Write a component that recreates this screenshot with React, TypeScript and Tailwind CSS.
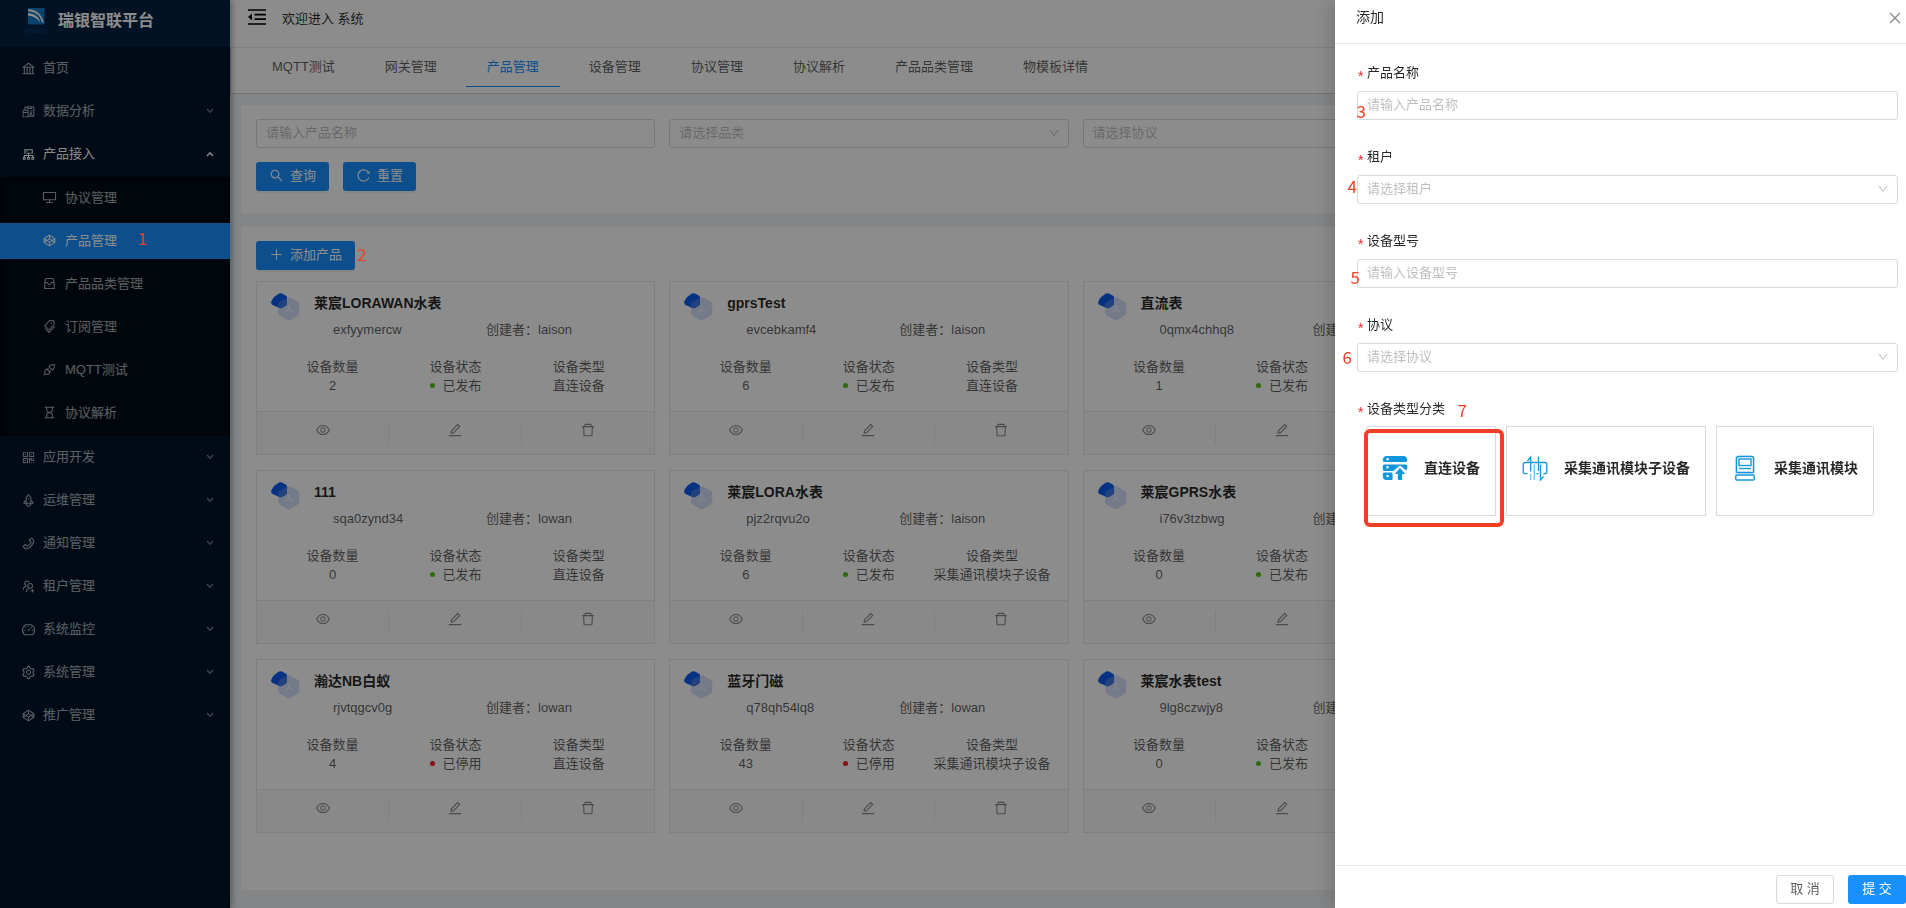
import type { ReactNode } from "react";
import type { IconType } from "react-icons";
import {
  AiOutlineApi,
  AiOutlineBank,
  AiOutlineCluster,
  AiOutlineClose,
  AiOutlineCodepen,
  AiOutlineDashboard,
  AiOutlineDelete,
  AiOutlineDesktop,
  AiOutlineDown,
  AiOutlineEdit,
  AiOutlineEye,
  AiOutlineHourglass,
  AiOutlinePhone,
  AiOutlinePlus,
  AiOutlineQrcode,
  AiOutlineReconciliation,
  AiOutlineReload,
  AiOutlineRocket,
  AiOutlineSearch,
  AiOutlineSetting,
  AiOutlineTags,
  AiOutlineUsergroupAdd,
} from "react-icons/ai";

type IconProps = { className?: string };
type MenuEntry = { label: string; icon: IconType | ((p: IconProps) => ReactNode); leaf?: boolean };

function CategoryIcon({ className }: IconProps) {
  return (
    <svg viewBox="0 0 15 15" className={className} fill="none" stroke="currentColor" strokeWidth="1.100" aria-hidden="true">
      <path d="M3.200 6V4.200c0-1 .6-1.700 1.600-1.700h5.400c1 0 1.600.7 1.600 1.700V6" />
      <path d="M2.800 6.500h2.700c.2 1.300 1 2 2 2s1.800-.7 2-2h2.700v6H2.800z" />
    </svg>
  );
}

const topMenu: MenuEntry[] = [
  { label: "首页", icon: AiOutlineBank, leaf: true },
  { label: "数据分析", icon: AiOutlineReconciliation },
];

const accessMenu: MenuEntry[] = [
  { label: "协议管理", icon: AiOutlineDesktop },
  { label: "产品管理", icon: AiOutlineCodepen },
  { label: "产品品类管理", icon: CategoryIcon },
  { label: "订阅管理", icon: AiOutlineTags },
  { label: "MQTT测试", icon: AiOutlineApi },
  { label: "协议解析", icon: AiOutlineHourglass },
];

const bottomMenu: MenuEntry[] = [
  { label: "应用开发", icon: AiOutlineQrcode },
  { label: "运维管理", icon: AiOutlineRocket },
  { label: "通知管理", icon: AiOutlinePhone },
  { label: "租户管理", icon: AiOutlineUsergroupAdd },
  { label: "系统监控", icon: AiOutlineDashboard },
  { label: "系统管理", icon: AiOutlineSetting },
  { label: "推广管理", icon: AiOutlineCodepen },
];

const tabs = ["MQTT测试", "网关管理", "产品管理", "设备管理", "协议管理", "协议解析", "产品品类管理", "物模板详情"];

type Product = {
  name: string;
  code: string;
  creator: string;
  count: number;
  published: boolean;
  kind: string;
};

const DIRECT = "直连设备";
const CHILD = "采集通讯模块子设备";

const products: Product[] = [
  { name: "莱宸LORAWAN水表", code: "exfyymercw", creator: "laison", count: 2, published: true, kind: DIRECT },
  { name: "gprsTest", code: "evcebkamf4", creator: "laison", count: 6, published: true, kind: DIRECT },
  { name: "直流表", code: "0qmx4chhq8", creator: "laison", count: 1, published: true, kind: DIRECT },
  { name: "111", code: "sqa0zynd34", creator: "lowan", count: 0, published: true, kind: DIRECT },
  { name: "莱宸LORA水表", code: "pjz2rqvu2o", creator: "laison", count: 6, published: true, kind: CHILD },
  { name: "莱宸GPRS水表", code: "i76v3tzbwg", creator: "lowan", count: 0, published: true, kind: DIRECT },
  { name: "瀚达NB白蚁", code: "rjvtqgcv0g", creator: "lowan", count: 4, published: false, kind: DIRECT },
  { name: "蓝牙门磁", code: "q78qh54lq8", creator: "lowan", count: 43, published: false, kind: CHILD },
  { name: "莱宸水表test", code: "9lg8czwjy8", creator: "lowan", count: 0, published: true, kind: DIRECT },
];

function BrandLogo() {
  return (
    <svg viewBox="0 0 26 28" className="h-7 w-[26px]" aria-hidden="true">
      <rect x="4" y="1" width="16.500" height="16.500" rx="1" fill="#1279c4" />
      <path d="M4 2.200c7 0 14 4 16 14.300l-2.500-2.500C16 8 11 4.200 4 4.200z" fill="#fff" />
      <path d="M4 6.200c6.500.4 10.500 3 12.500 9.300C13 11.500 9.500 9.300 4 8.600z" fill="#fff" />
      <text x="12.500" y="26" textAnchor="middle" fontSize="8" fill="#08407c" fontFamily="Liberation Sans, sans-serif">
        Reallin
      </text>
    </svg>
  );
}

function FoldIcon() {
  return (
    <svg viewBox="0 0 18 16" className="h-4 w-[18px]" fill="none" stroke="currentColor" strokeWidth="1.700" aria-hidden="true">
      <path d="M0 1h18M6.500 5.600H18M6.500 10.200H18M0 15h18" />
      <path d="M4 4.600v6.600L0 7.900z" fill="currentColor" stroke="none" />
    </svg>
  );
}

function ProductMark() {
  return (
    <svg viewBox="0 0 30 28" className="h-7 w-[30px] shrink-0" aria-hidden="true">
      <path
        d="M16.200 4.600a3 3 0 0 1 3 0l7.600 4.200a3 3 0 0 1 1.500 2.600v8.400a3 3 0 0 1-1.500 2.600l-7.600 4.700a3 3 0 0 1-3 0l-7.600-4.700A3 3 0 0 1 7.100 19.800v-8.400a3 3 0 0 1 1.500-2.600z"
        fill="#d6dffa"
      />
      <path
        d="M8 .6a3 3 0 0 1 3 0l4 2.200a2 2 0 0 1 1 1.800v5.600a3 3 0 0 1-1.400 2.500l-3.400 2a3 3 0 0 1-3 0L2 12.200a3 3 0 0 1-1.700-3.600A14 14 0 0 1 3.400 3.700z"
        fill="#0b5cf0"
      />
      <path d="M7.200 14.200v-2.800a3 3 0 0 1 1.500-2.600L15.900 4.800v5.500a3 3 0 0 1-1.400 2.400l-3.300 2a3 3 0 0 1-3 0z" fill="#3f78e6" />
      <path d="M18 12.500v4m0 0l-3.600 2.500m3.600-2.500l3.600 2.500" stroke="#eef3ff" strokeWidth="1.200" fill="none" strokeLinecap="round" />
    </svg>
  );
}

function DirectDeviceIcon() {
  return (
    <svg viewBox="0 0 26 26" className="size-[26px] shrink-0" aria-hidden="true">
      <path
        fill="#1296db"
        fillRule="evenodd"
        d="M4.500 1h17A3.800 3.800 0 0 1 25.300 5c0 1.200-.6 2-1.800 2H2.600C1.400 7 .8 6.200.8 5A3.800 3.800 0 0 1 4.500 1zM5.600 3a1.200 1.200 0 1 0 0 2.400 1.200 1.200 0 0 0 0-2.400z"
      />
      <path
        fill="#1296db"
        fillRule="evenodd"
        d="M2.600 9.400h21c1.200 0 1.700.7 1.700 1.800v1.600c0 1.200-.3 1.800-1.300 2.400l-6-4.600-6.600 5.300H2.600c-1.200 0-1.800-.6-1.800-1.700v-3c0-1.200.6-1.800 1.800-1.800zM5.600 11a1.200 1.200 0 1 0 0 2.500 1.200 1.200 0 0 0 0-2.500z"
      />
      <path
        fill="#1296db"
        fillRule="evenodd"
        d="M2.600 17.600h7.200c.5 0 .8.3.8.8v5.800c0 .5-.3.800-.8.800H4.500A3.700 3.700 0 0 1 .8 21.300v-2c0-1.100.6-1.700 1.800-1.700zm3 2.200a1.200 1.200 0 1 0 0 2.500 1.200 1.200 0 0 0 0-2.500z"
      />
      <path fill="#1296db" d="M18 13l5.200 6h-3.100v6h-4.200v-6h-3.100z" />
    </svg>
  );
}

function ChildDeviceIcon() {
  return (
    <svg viewBox="0 0 26 26" className="size-[26px] shrink-0" fill="none" stroke="#1296db" strokeWidth="1.300" aria-hidden="true">
      <path d="M8.700 16.500V2L5.500 6" />
      <path d="M16.500 1.500V16" />
      <path d="M8.700 19v6M12.300 9.500V25" opacity=".6" />
      <path d="M18.500 9.500V25l3-3.500" />
      <path d="M5.500 18.700H3.200c-1.100 0-2-.8-2-1.900V9.400c0-1.100.9-1.900 2-1.900h19.600c1.100 0 2 .8 2 1.900v7.400c0 1.100-.9 1.900-2 1.900h-1.500M14.500 18.700h1.800" />
    </svg>
  );
}

function ModuleIcon() {
  return (
    <svg viewBox="0 0 26 26" className="size-[26px] shrink-0" fill="none" stroke="#1296db" strokeWidth="1.400" aria-hidden="true">
      <path d="M2.800 19V3a2.400 2.400 0 0 1 2.400-2.400h15.600A2.400 2.400 0 0 1 23.200 3v16z" fill="#d9effa" stroke="none" />
      <path d="M4.500 16.500v-13c0-1.100.900-2 2-2h13c1.100 0 2 .9 2 2v13c0 .6-.4 1-1 1h-15c-.6 0-1-.4-1-1z" fill="#fff" />
      <rect x="7" y="4" width="12" height="6.500" />
      <path d="M7 13.500h12" />
      <rect x="3.800" y="20" width="18.400" height="5" rx="1" />
    </svg>
  );
}

function Chevron({ up }: { up?: boolean }) {
  return (
    <svg
      viewBox="0 0 8 6"
      className={up ? "ml-auto h-1.5 w-2" : "ml-auto h-1.5 w-2 opacity-65"}
      fill="none"
      stroke="currentColor"
      strokeWidth="1.400"
      aria-hidden="true"
    >
      <path d={up ? "M1 5l3-3.200L7 5" : "M1 1l3 3.200L7 1"} />
    </svg>
  );
}

function MenuRow({ entry }: { entry: MenuEntry }) {
  const Icon = entry.icon;
  return (
    <a href="#" className="flex h-9 items-center pr-4 pl-[21px] text-white/65">
      <Icon className="mr-[7px] size-[15px]" />
      {entry.label}
      {!entry.leaf && <Chevron />}
    </a>
  );
}

function Sidebar() {
  return (
    <aside className="z-10 flex w-[230px] shrink-0 flex-col bg-[#001529] shadow-[2px_0_6px_rgba(0,21,41,0.35)]">
      <div className="flex h-[47px] items-start bg-[#002140] pt-[7px] pl-6">
        <BrandLogo />
        <h1 className="mt-1 ml-2 text-base leading-5 font-bold text-white">瑞银智联平台</h1>
      </div>
      <nav className="flex flex-col pt-[3px]">
        <div className="flex flex-col gap-[7px]">
          {topMenu.map((m) => (
            <MenuRow key={m.label} entry={m} />
          ))}
          <a href="#" className="flex h-9 items-center pr-4 pl-[21px] text-white">
            <AiOutlineCluster className="mr-[7px] size-[15px]" />
            产品接入
            <Chevron up />
          </a>
        </div>
        <div className="mt-[5px] flex flex-col gap-[7px] bg-[#000c17] pt-[3px] pb-[5px] shadow-[inset_0_2px_8px_rgba(0,0,0,0.45)]">
          {accessMenu.map(({ label, icon: Icon }) => (
            <a
              key={label}
              href="#"
              className={
                label === "产品管理"
                  ? "flex h-9 items-center bg-[#1890ff] pb-px pl-[42px] text-white"
                  : "flex h-9 items-center pb-px pl-[42px] text-white/65"
              }
            >
              <Icon className="mr-2 size-[15px]" />
              {label}
            </a>
          ))}
        </div>
        <div className="mt-[3px] flex flex-col gap-[7px]">
          {bottomMenu.map((m) => (
            <MenuRow key={m.label} entry={m} />
          ))}
        </div>
      </nav>
    </aside>
  );
}

function PrimaryButton({ icon: Icon, children }: { icon: IconType; children: ReactNode }) {
  return (
    <button
      type="button"
      className="flex h-[29px] items-center gap-1.5 rounded-[3px] bg-[#1890ff] pr-[13px] pb-0.5 pl-[13px] text-white shadow-[0_2px_0_rgba(0,0,0,0.045)]"
    >
      <Icon className="size-[15px]" />
      {children}
    </button>
  );
}

const fieldClass =
  "h-[29px] w-full rounded-[3px] border border-[#d9d9d9] bg-white px-[9px] pb-0.5 text-[13px] text-black/65 placeholder:text-[#bfbfbf]";

function SelectBox({ id, hint, label }: { id: string; hint: string; label?: string }) {
  return (
    <div className="relative">
      <select
        id={id}
        aria-label={label}
        className="h-[29px] w-full appearance-none rounded-[3px] border border-[#d9d9d9] bg-white px-[9px] pb-0.5 text-[13px] text-[#bfbfbf]"
      >
        <option>{hint}</option>
      </select>
      <AiOutlineDown className="pointer-events-none absolute top-2 right-[9px] size-3 text-[#bfbfbf]" />
    </div>
  );
}

function ProductCard({ product }: { product: Product }) {
  return (
    <article className="flex h-[174px] flex-col border border-[#e8e8e8] bg-white">
      <div className="flex flex-1 flex-col px-3.5 pt-[11px]">
        <div className="flex gap-[13px]">
          <ProductMark />
          <div className="min-w-0 flex-1">
            <h3 className="text-sm leading-5 font-bold text-black/85">{product.name}</h3>
            <div className="mt-[9px] flex leading-4">
              <span className="w-[153px] shrink-0 pl-[19px]">{product.code}</span>
              <span className="ml-[19px]">创建者：{product.creator}</span>
            </div>
          </div>
        </div>
        <dl className="mt-[19px] grid grid-cols-3 text-center leading-[19px]">
          <div>
            <dt>设备数量</dt>
            <dd>{product.count}</dd>
          </div>
          <div>
            <dt>设备状态</dt>
            <dd className="flex items-center justify-center gap-2">
              <i className={product.published ? "size-[5px] rounded-full bg-[#52c41a]" : "size-[5px] rounded-full bg-[#f5222d]"} />
              {product.published ? "已发布" : "已停用"}
            </dd>
          </div>
          <div>
            <dt>设备类型</dt>
            <dd className="whitespace-nowrap">{product.kind}</dd>
          </div>
        </dl>
      </div>
      <div className="grid h-[43px] grid-cols-3 border-t border-[#e8e8e8] bg-[#fafafa] py-2.5 text-black/45">
        <button type="button" aria-label="查看" className="flex justify-center border-r border-[#e8e8e8]">
          <AiOutlineEye className="size-4" />
        </button>
        <button type="button" aria-label="编辑" className="flex justify-center border-r border-[#e8e8e8]">
          <AiOutlineEdit className="size-4" />
        </button>
        <button type="button" aria-label="删除" className="flex justify-center">
          <AiOutlineDelete className="size-4" />
        </button>
      </div>
    </article>
  );
}

function Required() {
  return <span className="h-4 w-[9px] pt-[3px] text-sm leading-4 text-[#f5222d]">*</span>;
}

function Field({ id, label, children }: { id: string; label: string; children: ReactNode }) {
  return (
    <div className="h-[84px]">
      <label htmlFor={id} className="mb-2 flex h-5 items-center pl-px text-black/85">
        <Required />
        {label}
      </label>
      {children}
    </div>
  );
}

function DeviceOption({ icon, label, shape, checked }: { icon: ReactNode; label: string; shape: string; checked?: boolean }) {
  return (
    <label
      className={`${shape} flex h-[90px] items-center gap-4 border border-[#d9d9d9] px-[15px] pb-1.5 text-sm font-bold whitespace-nowrap text-black/85`}
    >
      <input type="radio" name="deviceType" className="sr-only" defaultChecked={checked} />
      {icon}
      {label}
    </label>
  );
}

function AddDrawer() {
  return (
    <form className="fixed inset-y-0 right-0 z-30 flex w-[571px] flex-col bg-white shadow-[-6px_0_16px_rgba(0,0,0,0.15)]">
      <header className="flex h-11 items-start justify-between border-b border-[#e8e8e8] pt-2 pr-[3px] pl-[21px]">
        <h2 className="text-sm leading-[18px] text-black/85">添加</h2>
        <button type="button" aria-label="关闭" className="pt-0.5 text-black/45">
          <AiOutlineClose className="size-4" />
        </button>
      </header>
      <div className="flex-1 pt-[19px] pr-2 pl-[22px]">
        <Field id="name" label="产品名称">
          <input id="name" className={fieldClass} placeholder="请输入产品名称" />
        </Field>
        <Field id="tenant" label="租户">
          <SelectBox id="tenant" hint="请选择租户" />
        </Field>
        <Field id="model" label="设备型号">
          <input id="model" className={fieldClass} placeholder="请输入设备型号" />
        </Field>
        <Field id="protocol" label="协议">
          <SelectBox id="protocol" hint="请选择协议" />
        </Field>
        <fieldset>
          <legend className="mb-[7px] flex h-5 items-center pl-px text-black/85">
            <Required />
            设备类型分类
          </legend>
          <div className="flex gap-2.5 pl-[9px]">
            <DeviceOption icon={<DirectDeviceIcon />} label="直连设备" shape="rounded-l-[3px]" checked />
            <DeviceOption icon={<ChildDeviceIcon />} label="采集通讯模块子设备" shape="rounded-none" />
            <DeviceOption icon={<ModuleIcon />} label="采集通讯模块" shape="rounded-r-[3px]" />
          </div>
        </fieldset>
      </div>
      <footer className="flex h-[43px] justify-end gap-3.5 border-t border-[#e8e8e8] pt-[9px]">
        <button
          type="button"
          className="h-[29px] w-[58px] rounded-[3px] border border-[#d9d9d9] bg-white pb-0.5 text-black/65"
        >
          取 消
        </button>
        <button type="submit" className="h-[29px] w-[58px] rounded-[3px] bg-[#1890ff] pb-0.5 text-white">
          提 交
        </button>
      </footer>
    </form>
  );
}

/* Numbered walkthrough marks laid over the page and the drawer. */
function GuideMarks() {
  return (
    <div className="pointer-events-none fixed inset-0 z-40 font-['Noto_Sans_CJK_SC',sans-serif] text-[17px] leading-5 text-[#ee4026]">
      <span className="absolute top-[228px] left-[138px]">1</span>
      <span className="absolute top-[244px] left-[357px]">2</span>
      <span className="absolute top-[101px] right-[540px]">3</span>
      <span className="absolute top-[176px] right-[549px]">4</span>
      <span className="absolute top-[267px] right-[546px]">5</span>
      <span className="absolute top-[347px] right-[554px]">6</span>
      <span className="absolute top-[400px] right-[439px]">7</span>
      <div className="absolute top-[429px] right-[402px] h-[98px] w-[140px] rounded-md border-4 border-[#ee4026]" />
    </div>
  );
}

export default function App() {
  return (
    <div className="flex min-h-screen overflow-hidden bg-[#f0f2f5] font-['Liberation_Sans','Noto_Sans_CJK_SC',sans-serif] text-[13px] text-black/65">
      <Sidebar />
      <main className="flex min-w-0 flex-1 flex-col">
        <header className="flex h-12 items-start border-b border-[#e8e8e8] bg-white pt-2 pl-[18px] text-black/85">
          <button type="button" aria-label="收起菜单" className="pt-px text-black">
            <FoldIcon />
          </button>
          <span className="ml-4 pt-px leading-5">欢迎进入 系统</span>
        </header>
        <nav className="flex h-[46px] items-start gap-2 border-b border-l border-[#d0d0d0] bg-white pl-5">
          {tabs.map((t) => (
            <a
              key={t}
              href="#"
              className={
                t === "产品管理"
                  ? "flex h-[39px] items-center border-b border-[#1890ff] px-[21px] text-[#1890ff]"
                  : "flex h-[39px] items-center border-b border-transparent px-[21px]"
              }
            >
              {t}
            </a>
          ))}
        </nav>
        <section className="mt-[11px] ml-[11px] h-[108px] bg-white pt-3.5 pr-[11px] pl-[15px]">
          <div className="grid grid-cols-4 gap-x-3.5">
            <input aria-label="产品名称" className={fieldClass} placeholder="请输入产品名称" />
            <SelectBox id="filter-category" label="品类" hint="请选择品类" />
            <SelectBox id="filter-protocol" label="协议" hint="请选择协议" />
          </div>
          <div className="mt-3.5 flex gap-3.5">
            <PrimaryButton icon={AiOutlineSearch}>查询</PrimaryButton>
            <PrimaryButton icon={AiOutlineReload}>重置</PrimaryButton>
          </div>
        </section>
        <section className="mt-3.5 mb-[18px] ml-[11px] flex-1 bg-white pt-3.5 pr-[11px] pl-[15px]">
          <div className="flex">
            <PrimaryButton icon={AiOutlinePlus}>添加产品</PrimaryButton>
          </div>
          <div className="mt-[11px] grid grid-cols-4 gap-x-3.5 gap-y-[15px]">
            {products.map((p, i) => (
              <div key={p.code} className={i % 3 === 0 ? "col-start-1" : ""}>
                <ProductCard product={p} />
              </div>
            ))}
          </div>
        </section>
      </main>
      <div className="fixed inset-0 z-20 bg-black/45" />
      <AddDrawer />
      <GuideMarks />
    </div>
  );
}
